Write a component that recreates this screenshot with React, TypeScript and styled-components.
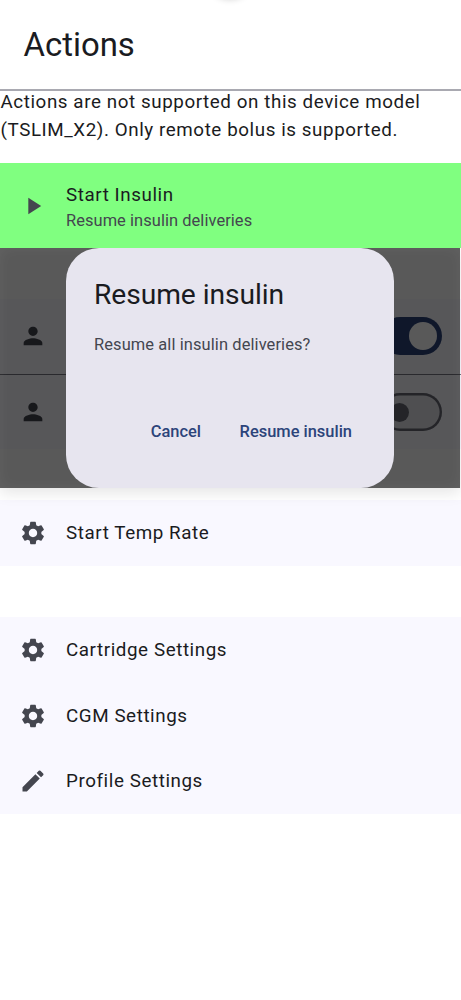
import React from 'react';
import styled, { createGlobalStyle } from 'styled-components';
import { MdEdit, MdPerson, MdPlayArrow, MdSettings } from 'react-icons/md';

const GlobalStyle = createGlobalStyle`
  * { box-sizing: border-box; }
  body { margin: 0; background: #fff; font-family: Roboto, sans-serif; color: #1a1b21; }
`;

const Screen = styled.main`
  position: relative;
  width: 461px;
  height: 1000px;
  overflow: hidden;
  background: #fff;
`;

const TopShadow = styled.div`
  position: absolute;
  top: -42px;
  left: 209px;
  width: 42px;
  height: 40px;
  border-radius: 50%;
  box-shadow: 0 1px 7px rgba(0, 0, 0, 0.2);
`;

const Header = styled.header`
  height: 91px;
  padding: 0 23.5px;
  display: flex;
  align-items: center;
  border-bottom: 2px solid #a9a9b1;
`;

const Title = styled.h1`
  margin: 0;
  font-size: 32.9px;
  line-height: 42px;
  font-weight: 400;
`;

const Notice = styled.p`
  margin: -3px 0 3px;
  height: 72px;
  padding: 0 0 0 0.5px;
  font-size: 18.8px;
  line-height: 28.2px;
  letter-spacing: 0.58px;
`;

const Row = styled.div<{ $height: number; $tone?: string }>`
  height: ${(p) => p.$height}px;
  padding: 0 19px;
  display: flex;
  align-items: center;
  gap: 19px;
  background: ${(p) => p.$tone ?? '#f9f8ff'};
  color: #44464f;

  > svg {
    flex: none;
    width: 28px;
    height: 28px;
  }
`;

const RowText = styled.div`
  flex: 1;
  display: flex;
  flex-direction: column;
  padding-top: 2.5px;
`;

const Label = styled.span`
  font-size: 18.8px;
  line-height: 28px;
  letter-spacing: 0.58px;
  color: #1a1b21;
`;

const Detail = styled.span`
  font-size: 16.45px;
  line-height: 24.5px;
  letter-spacing: 0.06px;
`;

const Gap = styled.div<{ $height: number }>`
  height: ${(p) => p.$height}px;
`;

const Line = styled.div`
  height: 1.5px;
  background: #757780;
`;

const Track = styled.div<{ $on?: boolean }>`
  width: 61px;
  height: 38px;
  padding: ${(p) => (p.$on ? '0 5px' : '0 9px')};
  border-radius: 19px;
  box-shadow: ${(p) => (p.$on ? 'none' : 'inset 0 0 0 2.4px #676973')};
  display: flex;
  align-items: center;
  justify-content: ${(p) => (p.$on ? 'flex-end' : 'flex-start')};
  background: ${(p) => (p.$on ? '#2c447a' : '#e2e2e9')};
`;

const Thumb = styled.div<{ $on?: boolean }>`
  width: ${(p) => (p.$on ? 28 : 19)}px;
  height: ${(p) => (p.$on ? 28 : 19)}px;
  border-radius: 50%;
  background: ${(p) => (p.$on ? '#fff' : '#676973')};
`;

const Scrim = styled.div`
  position: absolute;
  top: 248px;
  left: 0;
  width: 460px;
  height: 239.5px;
  display: flex;
  justify-content: center;
  background: rgba(0, 0, 0, 0.65);
  box-shadow: 0 5px 14px rgba(0, 0, 0, 0.1), inset 0 0 14px rgba(255, 255, 255, 0.06);
  clip-path: inset(0 -1px -22px 0);
`;

const Dialog = styled.section`
  width: 328.6px;
  height: 239.5px;
  padding: 28px 28.3px;
  display: flex;
  flex-direction: column;
  border-radius: 33px;
  background: #e7e5ef;
`;

const DialogTitle = styled.h2`
  margin: 0 0 19px;
  font-size: 28.2px;
  line-height: 37.6px;
  font-weight: 400;
  letter-spacing: -0.06px;
`;

const DialogBody = styled.p`
  margin: 0;
  flex: 1;
  font-size: 16.45px;
  line-height: 23.5px;
  letter-spacing: 0.1px;
  color: #44464f;
`;

const Buttons = styled.div`
  display: flex;
  justify-content: flex-end;
  gap: 10.5px;
  padding-bottom: 4.5px;
`;

const TextButton = styled.button`
  height: 47px;
  padding: 0 14px;
  border: 0;
  background: transparent;
  color: #2c447a;
  font: 500 16.45px/24px Roboto, sans-serif;
`;

export default function App() {
  return (
    <Screen>
      <GlobalStyle />
      <TopShadow />
      <Header>
        <Title>Actions</Title>
      </Header>
      <Notice>
        Actions are not supported on this device model (TSLIM_X2). Only remote bolus is supported.
      </Notice>
      <Row $height={85} $tone="#80ff80">
        <MdPlayArrow />
        <RowText>
          <Label>Start Insulin</Label>
          <Detail>Resume insulin deliveries</Detail>
        </RowText>
      </Row>
      <Gap $height={51} />
      <Row $height={74.5}>
        <MdPerson />
        <RowText />
        <Track $on><Thumb $on /></Track>
      </Row>
      <Line />
      <Row $height={74.4}>
        <MdPerson />
        <RowText />
        <Track><Thumb /></Track>
      </Row>
      <Gap $height={51} />
      <Row $height={66}>
        <MdSettings />
        <Label>Start Temp Rate</Label>
      </Row>
      <Gap $height={50.6} />
      <Row $height={65.9}>
        <MdSettings />
        <Label>Cartridge Settings</Label>
      </Row>
      <Row $height={65.7}>
        <MdSettings />
        <Label>CGM Settings</Label>
      </Row>
      <Row $height={65.8}>
        <MdEdit />
        <Label>Profile Settings</Label>
      </Row>
      <Scrim>
        <Dialog role="dialog">
          <DialogTitle>Resume insulin</DialogTitle>
          <DialogBody>Resume all insulin deliveries?</DialogBody>
          <Buttons>
            <TextButton>Cancel</TextButton>
            <TextButton>Resume insulin</TextButton>
          </Buttons>
        </Dialog>
      </Scrim>
    </Screen>
  );
}
